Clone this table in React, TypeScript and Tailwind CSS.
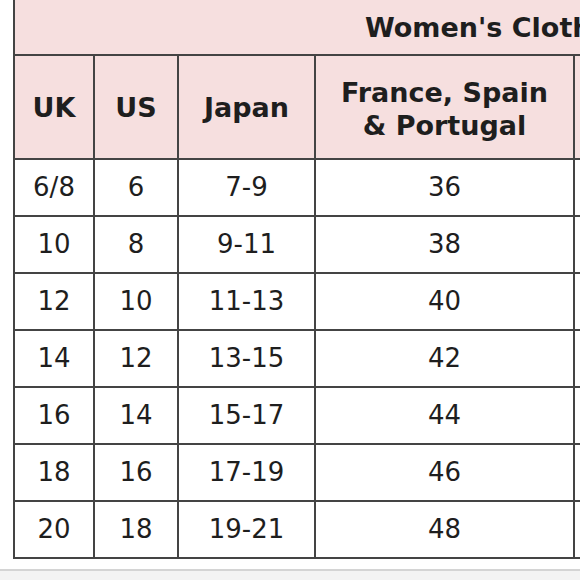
const rows = [
  ["6/8", "6", "7-9", "36"],
  ["10", "8", "9-11", "38"],
  ["12", "10", "11-13", "40"],
  ["14", "12", "13-15", "42"],
  ["16", "14", "15-17", "44"],
  ["18", "16", "17-19", "46"],
  ["20", "18", "19-21", "48"],
];

export default function App() {
  return (
    <div className="w-[580px] h-[580px] overflow-hidden bg-white font-['DejaVu_Sans',sans-serif] text-[#1e1e1e]">
      <div className="pl-[13px] h-[561px] overflow-hidden">
        <table className="border-collapse table-fixed w-[820px]">
          <colgroup>
            <col className="w-[80px]" />
            <col className="w-[84px]" />
            <col className="w-[137px]" />
            <col className="w-[259px]" />
            <col className="w-[260px]" />
          </colgroup>
          <thead>
            <tr className="bg-[#f6dfdf] h-[55px]">
              <th
                colSpan={5}
                className="border-2 border-t-0 border-[#444] text-left pl-[350px] text-[27px] font-bold pt-[2px] whitespace-nowrap"
              >
                Women's Clothing Sizes
              </th>
            </tr>
            <tr className="bg-[#f6dfdf] h-[104px] text-[27px] font-bold">
              <th className="border-2 border-[#444] pt-[3px]">UK</th>
              <th className="border-2 border-[#444] pt-[3px]">US</th>
              <th className="border-2 border-[#444] pt-[3px]">Japan</th>
              <th className="border-2 border-[#444] leading-[33px] pt-[3px]">
                France, Spain
                <br />& Portugal
              </th>
              <th className="border-2 border-[#444]"></th>
            </tr>
          </thead>
          <tbody className="text-[26px]">
            {rows.map((r, i) => (
              <tr key={i} className="h-[57px]">
                {r.map((c, j) => (
                  <td key={j} className="border-2 border-[#444] text-center">
                    {c}
                  </td>
                ))}
                <td className="border-2 border-[#444]"></td>
              </tr>
            ))}
          </tbody>
        </table>
      </div>
      <div className="h-[8px] bg-white" />
      <div className="h-[11px] border-t-2 border-[#d4d4d4] bg-[#f3f3f3]" />
    </div>
  );
}
